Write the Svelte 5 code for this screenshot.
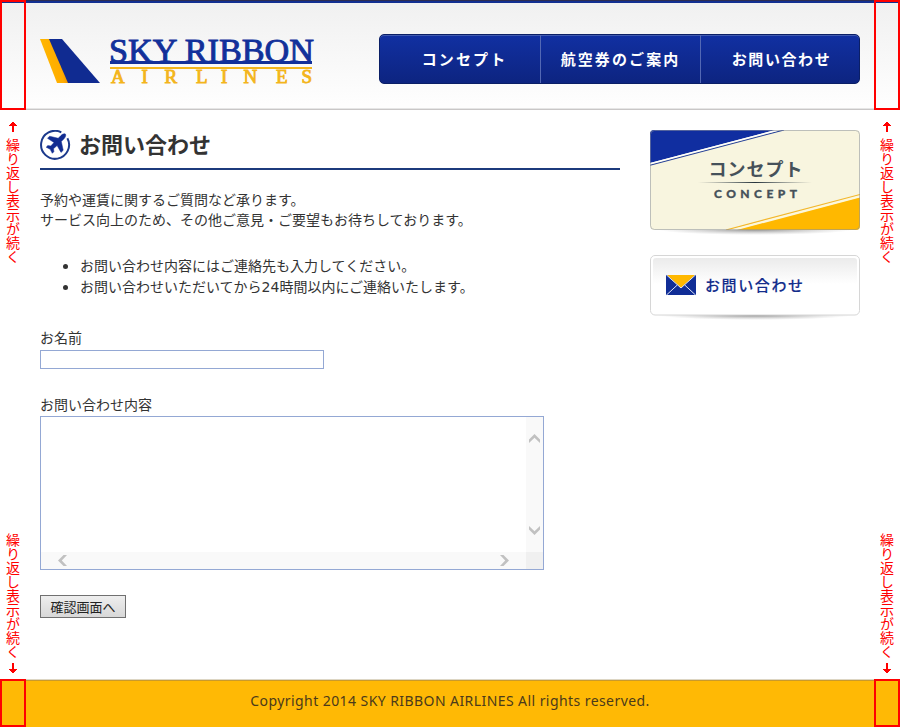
<script>
  const navItems = ['コンセプト', '航空券のご案内', 'お問い合わせ'];
  const note = '繰り返し表示が続く';
</script>

{#snippet rail()}
  <div class="rail">
    <div class="mark">
      <svg width="10" height="11" viewBox="0 0 10 11"><path d="M4 11V5H1V4H2V3H3V2H4V1H6V2H7V3H8V4H9V5H6V11Z" /></svg>
      <span>{note}</span>
    </div>
    <div class="mark">
      <span>{note}</span>
      <svg width="10" height="11" viewBox="0 0 10 11"><path d="M4 0V6H1V7H2V8H3V9H4V10H6V9H7V8H8V7H9V6H6V0Z" /></svg>
    </div>
  </div>
{/snippet}

<div class="page">
  <header>
    <div class="edge"></div>
    <div class="head">
      <svg class="logo" width="280" height="50" viewBox="0 0 280 50">
        <defs>
          <linearGradient id="gold" x1="0" y1=".3" x2="1" y2="0">
            <stop offset="0" stop-color="#ffb800" />
            <stop offset=".55" stop-color="#ffac00" />
            <stop offset="1" stop-color="#d66e00" />
          </linearGradient>
        </defs>
        <path d="M0 3H11L29 47H17Z" fill="url(#gold)" />
        <path d="M9 3H22L60 47H28Z" fill="#102b91" />
        <text class="sky" x="69" y="25.500" textLength="205" lengthAdjust="spacingAndGlyphs">SKY RIBBON</text>
        <rect x="70" y="25" width="202" height="3" fill="#12309a" />
        <rect x="70" y="31" width="202" height="2" fill="#f3b51c" />
        <text class="air" x="71 101.500 124.500 156 181 203.500 236 261.500" y="46.500">AIRLINES</text>
      </svg>
      <nav>
        {#each navItems as item}
          <a href="#top">{item}</a>
        {/each}
      </nav>
    </div>
    <div class="edge"></div>
  </header>

  <div class="middle">
    {@render rail()}
    <main>
      <section>
        <h1>
          <svg width="31" height="31" viewBox="0 0 31 31">
            <path d="M21.300 2.300A14 14 0 1 0 27.400 8.200" fill="none" stroke="#1c3a8c" stroke-width="2" />
            <path d="M25.400 4.100C24.200 3.200 22.300 4.200 20.900 5.600L18.200 8.300L9.600 6.200L7.500 8.300L14 12.500L10.800 16L7.800 15.600L6.200 17.200L10.200 19.300L12.300 23.300L13.900 21.700L13.500 18.700L17.100 15.500L21 22.400L23.200 20.300L21.300 11.500L24 8.800C25.400 7.400 26.300 5 25.400 4.100Z" fill="#112c91" stroke="#112c91" stroke-width=".5" />
          </svg>
          <span>お問い合わせ</span>
        </h1>
        <p>予約や運賃に関するご質問など承ります。<br />サービス向上のため、その他ご意見・ご要望もお待ちしております。</p>
        <ul>
          <li>お問い合わせ内容にはご連絡先も入力してください。</li>
          <li>お問い合わせいただいてから24時間以内にご連絡いたします。</li>
        </ul>
        <label for="name">お名前</label>
        <input id="name" type="text" />
        <label class="second" for="body">お問い合わせ内容</label>
        <div class="area">
          <textarea id="body"></textarea>
          <div class="vbar">
            <svg width="11" height="9" viewBox="0 0 11 9"><path d="M0 9V5.500L5.500 0L11 5.500V9L5.500 3.800Z" /></svg>
            <svg width="11" height="9" viewBox="0 0 11 9"><path d="M0 0V3.500L5.500 9L11 3.500V0L5.500 5.200Z" /></svg>
          </div>
          <div class="hbar">
            <svg width="9" height="11" viewBox="0 0 9 11"><path d="M9 0H5.500L0 5.500L5.500 11H9L3.800 5.500Z" /></svg>
            <svg width="9" height="11" viewBox="0 0 9 11"><path d="M0 0H3.500L9 5.500L3.500 11H0L5.200 5.500Z" /></svg>
          </div>
          <div class="corner"></div>
        </div>
        <button type="button">確認画面へ</button>
      </section>

      <aside>
        <svg class="concept" width="210" height="107" viewBox="0 0 210 107">
          <defs>
            <clipPath id="card"><rect width="210" height="100" rx="4" /></clipPath>
            <linearGradient id="rule">
              <stop offset="0" stop-color="#46515a" stop-opacity="0" />
              <stop offset=".5" stop-color="#26343c" />
              <stop offset="1" stop-color="#46515a" stop-opacity="0" />
            </linearGradient>
            <radialGradient id="shade">
              <stop offset="0" stop-color="#777" stop-opacity=".85" />
              <stop offset="1" stop-color="#aaa" stop-opacity="0" />
            </radialGradient>
          </defs>
          <ellipse cx="105" cy="99.500" rx="98" ry="5.500" fill="url(#shade)" />
          <g clip-path="url(#card)">
            <rect width="210" height="100" fill="#f8f5df" />
            <path d="M0 0H125L0 33Z" fill="#102ea0" />
            <path d="M0 35.200L134 0" stroke="#243f98" stroke-width="1.100" />
            <path d="M0 33.600L128 0" stroke="#fff" stroke-width="1.300" />
            <path d="M210 67.500V100H87Z" fill="#ffb800" />
            <path d="M76 100L210 64.500" stroke="#f3b72b" stroke-width="1.200" />
            <path d="M82 100L210 66.300" stroke="#fff8d8" stroke-width="1.200" />
          </g>
          <rect x=".5" y=".5" width="209" height="99" rx="4" fill="none" stroke="#8d929b" stroke-opacity=".55" />
          <text class="cj" x="58.500" y="46" textLength="94">コンセプト</text>
          <rect x="48" y="52" width="114" height="1" fill="url(#rule)" />
          <text class="ce" x="64" y="67.500" textLength="83">CONCEPT</text>
        </svg>
        <svg class="contact" width="210" height="67" viewBox="0 0 210 67">
          <defs>
            <linearGradient id="sheen" x2="0" y2="1">
              <stop offset="0" stop-color="#ebebeb" />
              <stop offset=".48" stop-color="#fff" />
            </linearGradient>
          </defs>
          <ellipse cx="105" cy="60" rx="98" ry="5" fill="url(#shade)" />
          <rect x=".5" y=".5" width="209" height="59.500" rx="4.500" fill="#fff" stroke="#d6d6d6" />
          <rect x="3" y="3" width="204" height="54" rx="3" fill="url(#sheen)" />
          <rect x="16" y="20" width="30" height="20" rx=".7" fill="#102d96" />
          <path d="M17 20H45L31 33Z" fill="#ffb800" />
          <path d="M16.500 20L31 33L45.500 20M16.500 40L27.300 30M45.500 40L34.700 30" fill="none" stroke="#dfe5f5" stroke-width="1" />
          <text class="ct" x="55" y="35.500" textLength="98">お問い合わせ</text>
        </svg>
      </aside>
    </main>
    {@render rail()}
  </div>

  <footer>
    <div class="edge"></div>
    <small>Copyright 2014 SKY RIBBON AIRLINES All rights reserved.</small>
    <div class="edge"></div>
  </footer>
</div>

<style>
  :global(body) { margin: 0; background: #fff; }
  .page {
    width: 900px;
    height: 727px;
    display: flex;
    flex-direction: column;
    overflow: hidden;
    color: #333;
    font: 14px/20px "Noto Sans CJK JP", sans-serif;
  }
  .page * { box-sizing: border-box; }
  header {
    height: 110px;
    flex: none;
    display: flex;
    background:
      linear-gradient(#2c2d52 0 1px, #122f91 1px 3px, transparent 3px),
      linear-gradient(transparent 108px, #e6e6e6 108px 109px, #c9c7c7 109px),
      linear-gradient(#f0f0f0, #fefefe 95%);
  }
  .edge { flex: none; width: 26px; border: 2px solid #f00; }
  .head {
    flex: 1;
    display: flex;
    justify-content: space-between;
    padding: 34px 14px 0;
  }
  .logo { display: block; margin-top: 2px; overflow: visible; }
  .sky { font: 33px "Liberation Serif", serif; fill: #12309a; stroke: #12309a; stroke-width: .9; }
  .air { font: 19px "Liberation Serif", serif; fill: #f3b51c; stroke: #f3b51c; stroke-width: .9; }
  nav {
    width: 481px;
    height: 50px;
    display: grid;
    grid-template-columns: 160px 160px 159px;
    border: 1px solid #0b1f66;
    border-radius: 5px;
    background: linear-gradient(#1130a2, #0d2480);
    box-shadow: inset 0 1px #415bb0;
    overflow: hidden;
  }
  nav a {
    text-align: center;
    color: #fff;
    text-decoration: none;
    white-space: nowrap;
    font-weight: 700;
    font-size: 15px;
    line-height: 48px;
    letter-spacing: 2.100px;
    padding-left: 9px;
  }
  nav a + a { border-left: 1px solid #5368b4; padding-left: 0; }
  nav a:last-child { letter-spacing: 1.600px; padding-left: 3px; }
  .middle { flex: 1; display: flex; min-height: 0; }
  .rail {
    width: 26px;
    flex: none;
    display: flex;
    flex-direction: column;
    justify-content: space-between;
    padding: 11px 0 5px;
  }
  .mark { display: flex; flex-direction: column; align-items: center; gap: 6px; color: #f00; }
  .mark:last-child { gap: 4px; }
  .mark span { writing-mode: vertical-rl; font-size: 14px; line-height: 26px; }
  .mark svg { display: block; }
  .mark path { fill: #f00; }
  main { flex: 1; display: flex; justify-content: space-between; padding: 20px 14px 0; }
  section { width: 580px; }
  h1 {
    margin: 0 0 19px;
    height: 40px;
    display: flex;
    align-items: flex-start;
    gap: 8px;
    border-bottom: 2px solid #1c3a7c;
    font-size: 22px;
    line-height: 27px;
    font-weight: 700;
  }
  p { margin: 0; }
  ul { margin: 27px 0 0; padding-left: 40px; font-family: "DejaVu Sans", "Noto Sans CJK JP", sans-serif; line-height: 21px; }
  li::marker { font-size: 17px; line-height: 1; }
  li { height: 21px; }
  label { display: block; margin-top: 29px; }
  .second { margin-top: 25px; }
  input {
    display: block;
    width: 284px;
    height: 19px;
    margin-top: 3px;
    padding: 0 3px;
    border: 1px solid #94a8d4;
    background: #fff;
  }
  .area {
    width: 504px;
    height: 154px;
    margin-top: 2px;
    display: grid;
    grid-template: 1fr 17px / 1fr 17px;
    border: 1px solid #94a8d4;
  }
  textarea { border: 0; resize: none; width: 100%; height: 100%; padding: 2px; outline: 0; }
  .vbar, .hbar { display: flex; justify-content: space-between; align-items: center; background: #f9f9f9; }
  .vbar { flex-direction: column; padding: 17px 0; }
  .hbar { padding: 0 17px; }
  .vbar path, .hbar path { fill: #c1c1c1; }
  .corner { background: #f0f0f0; }
  button {
    display: block;
    width: 86px;
    height: 23px;
    margin-top: 25px;
    padding: 0;
    border: 1px solid #707070;
    background: linear-gradient(#eee, #d8d8d8);
    color: #222;
    font: 13px/20px "Noto Sans CJK JP", sans-serif;
  }
  aside { width: 210px; display: flex; flex-direction: column; gap: 18px; }
  aside svg { display: block; }
  .cj, .ct { font-family: "Noto Sans CJK JP", sans-serif; font-weight: 700; }
  .cj { font-size: 18px; fill: #46515a; }
  .ce { font: 900 12px Lato, sans-serif; fill: #46515a; stroke: #46515a; stroke-width: .3; }
  .ct { font-size: 15px; font-weight: 500; fill: #132d8c; stroke: #132d8c; stroke-width: .15; }
  footer {
    height: 48px;
    flex: none;
    display: flex;
    background: linear-gradient(#ddd6c4 0 1px, #c99a2c 1px 2px, #ffb905 2px);
  }
  small {
    flex: 1;
    text-align: center;
    font: 14px/44px "Noto Sans", sans-serif;
    letter-spacing: .430px;
    color: #4b3a1b;
  }
</style>
